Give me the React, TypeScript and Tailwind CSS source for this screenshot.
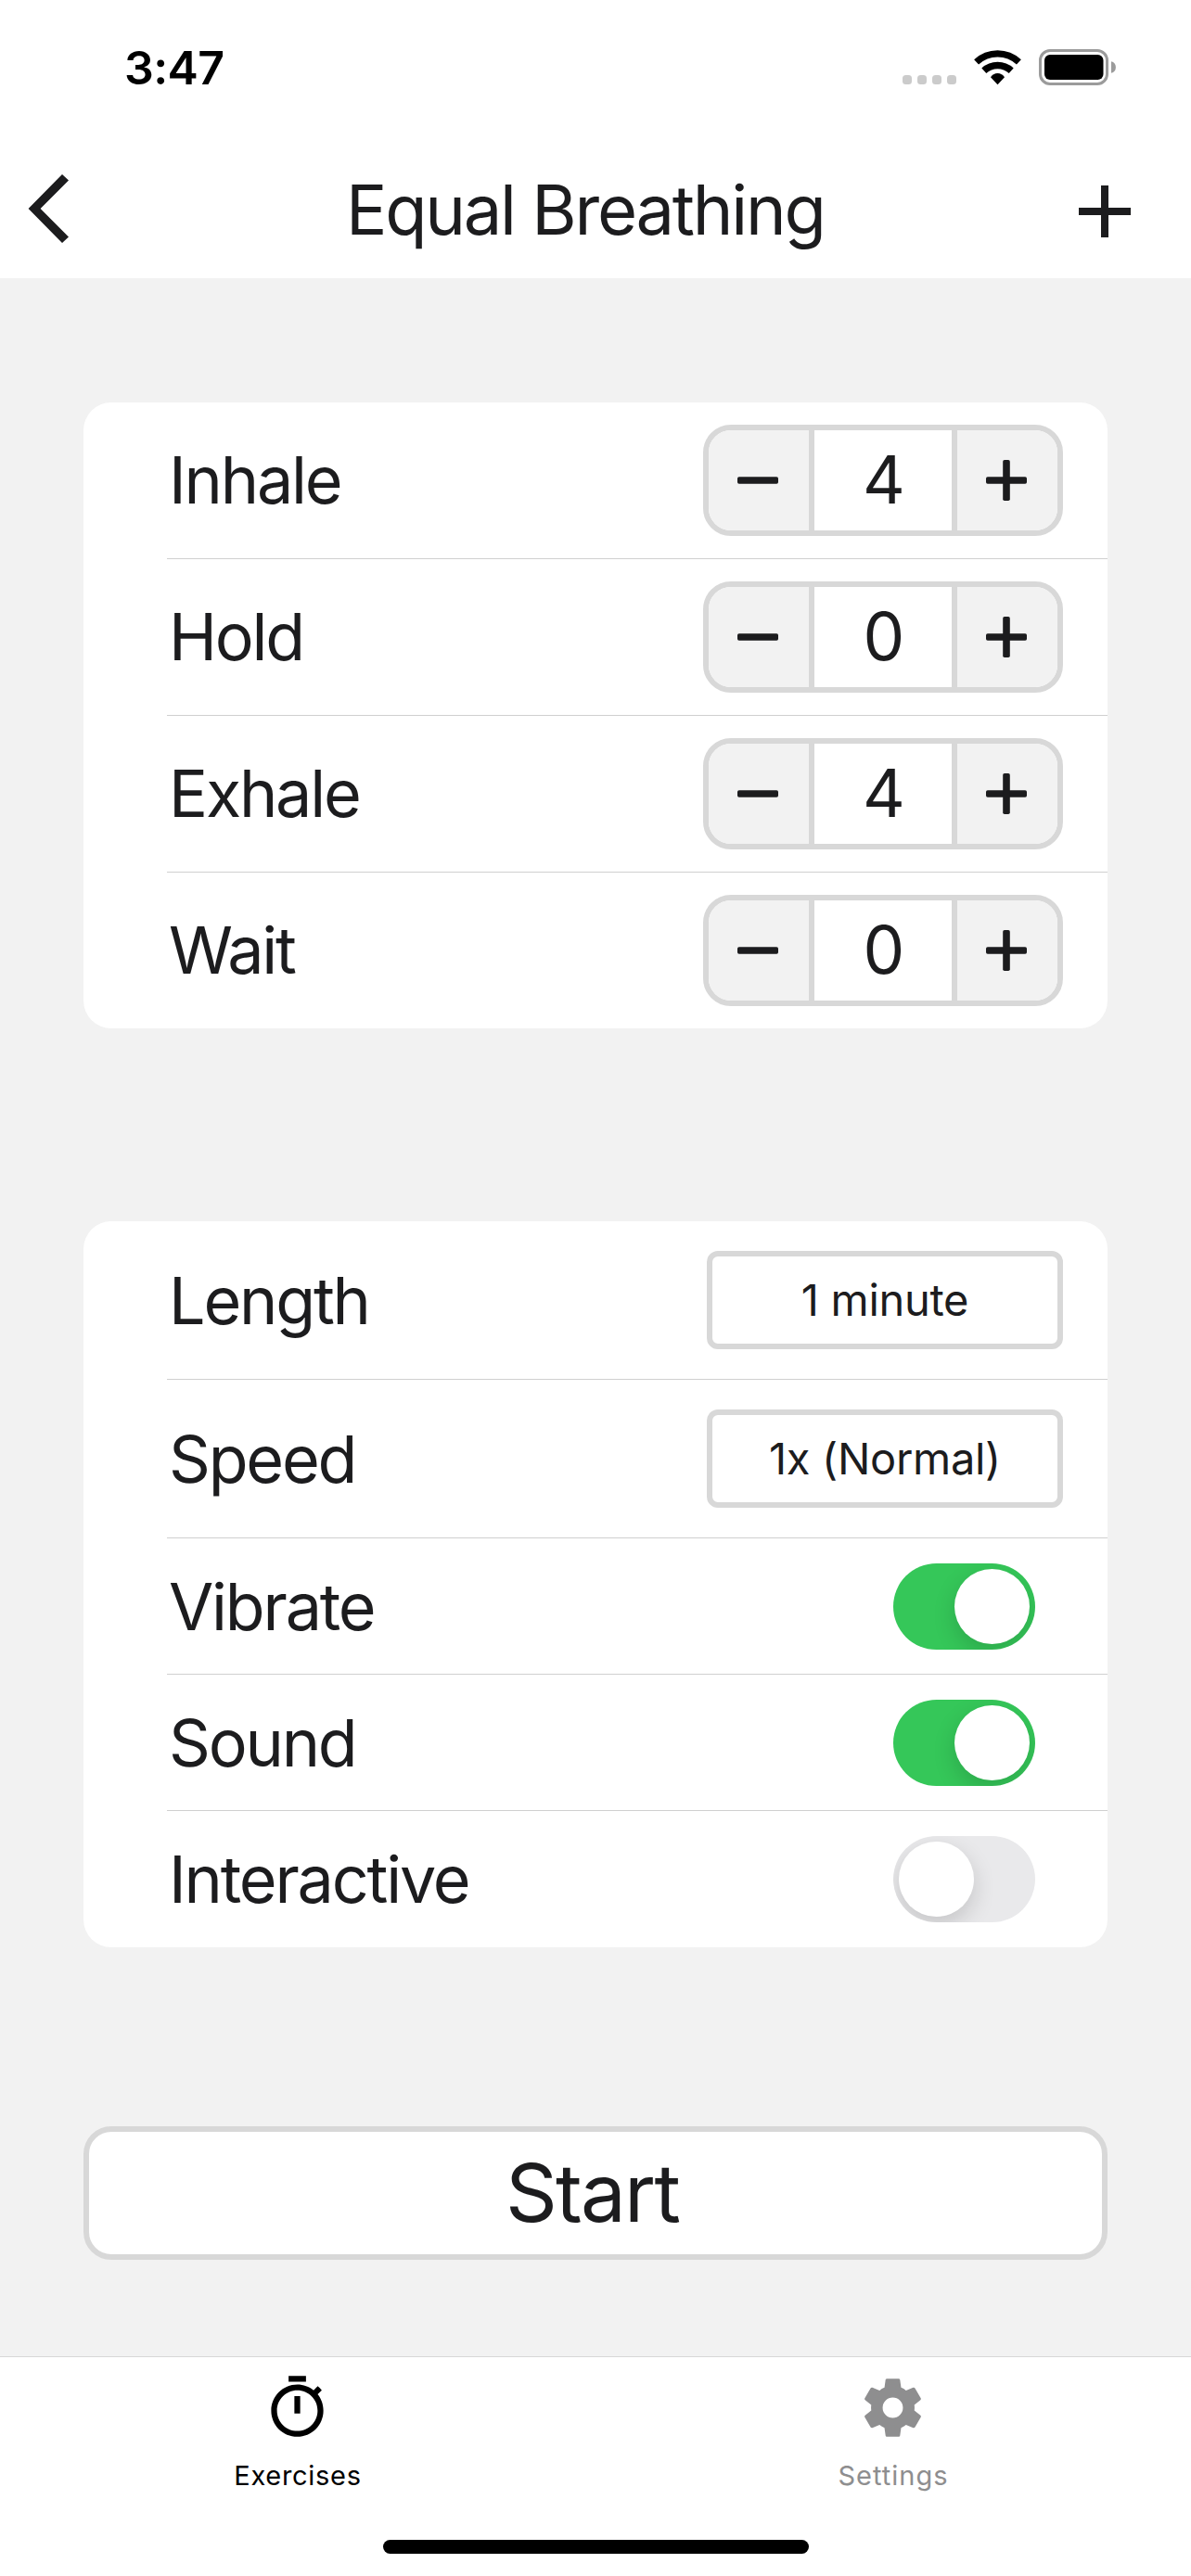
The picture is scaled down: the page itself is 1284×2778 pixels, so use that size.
import React from "react";

function StatusBar() {
  return (
    <div className="flex h-[146px] items-start justify-between pl-[134px] pr-[81px] text-black">
      <span className="mt-[42px] text-[50px] leading-[62px] font-semibold tracking-[-0.6px]">3:47</span>
      <div className="mt-[53px] flex h-[39px]">
        <div className="mt-[28px] flex gap-[6px]">
          {[0, 1, 2, 3].map((i) => (
            <span key={i} className="h-[10px] w-[10px] rounded-[3.5px] bg-[#cbcbcb]" />
          ))}
        </div>
        <svg className="ml-[19px] h-[39px] w-[51px]" viewBox="0 0 51 39" fill="none">
          <path d="M2.6 13.9A33.5 33.5 0 0 1 48.4 13.9" stroke="#000" strokeWidth="7.2" />
          <path d="M10.8 23.2A21.8 21.8 0 0 1 40.2 23.2" stroke="#000" strokeWidth="7.4" />
          <path d="M25.5 38.3 18 30.3A8.8 8.8 0 0 1 33 30.3Z" fill="#000" />
        </svg>
        <svg className="ml-[19px] h-[39px] w-[83px]" viewBox="0 0 83 39">
          <rect x="1.5" y="1.5" width="72" height="36" rx="10.5" fill="none" stroke="#9b9b9b" strokeWidth="3" />
          <rect x="6" y="6" width="63.5" height="27" rx="6" fill="#000" />
          <path d="M78 13.2a6.5 6.5 0 0 1 0 12.6Z" fill="#9b9b9b" />
        </svg>
      </div>
    </div>
  );
}

function Header() {
  return (
    <header className="flex h-[154px] items-start pl-[30px] pr-[65px]">
      <svg className="mt-[42px] h-[74px] w-[44px]" viewBox="0 0 44 74">
        <path d="M37 0 44 6.6 13.6 37 44 67.4 37 74 .6 37Z" fill="#1c1c1e" />
      </svg>
      <h1 className="mt-[35px] ml-[299px] text-[74px] leading-[90px] tracking-[-2.25px]">Equal Breathing</h1>
      <svg className="mt-[54px] ml-auto h-[56px] w-[56px]" viewBox="0 0 56 56">
        <path d="M24 0h8v24h24v8H32v24h-8V32H0v-8h24Z" fill="#1c1c1e" />
      </svg>
    </header>
  );
}

function Row({
  label,
  height,
  nudge = "",
  children,
}: {
  label: string;
  height: string;
  nudge?: string;
  children: React.ReactNode;
}) {
  return (
    <div className={`ml-[90px] flex items-center justify-between border-b border-[#d0d0d0] last:border-b-0 ${height}`}>
      <span className={`ml-[2px] text-[70px] leading-[86px] tracking-[-2.2px] ${nudge}`}>{label}</span>
      {children}
    </div>
  );
}

function Stepper({ value }: { value: number }) {
  return (
    <div className="mr-[48px] flex h-[120px] w-[388px] overflow-hidden rounded-[30px] border-[6px] border-[#d8d8d8] bg-white">
      <button className="flex w-[114px] items-center border-r-[6px] border-[#d8d8d8] bg-[#f2f2f2] pl-[31px]">
        <svg className="h-[44px] w-[44px]" viewBox="0 0 44 44">
          <rect y="18.2" width="44" height="7.6" rx="1.8" fill="#1c1c1e" />
        </svg>
      </button>
      <span className="w-[148px] pl-[2px] text-center text-[71px] leading-[107px]">{value}</span>
      <button className="flex w-[114px] items-center border-l-[6px] border-[#d8d8d8] bg-[#f2f2f2] pl-[31px]">
        <svg className="h-[44px] w-[44px]" viewBox="0 0 44 44">
          <rect y="18.2" width="44" height="7.6" rx="1.8" fill="#1c1c1e" />
          <rect x="18.2" width="7.6" height="44" rx="1.8" fill="#1c1c1e" />
        </svg>
      </button>
    </div>
  );
}

function Select({ value }: { value: string }) {
  return (
    <div className="mr-[48px] flex h-[106px] w-[384px] items-center justify-center rounded-[12px] border-[6px] border-[#d8d8d8] pt-[1px] text-[47px] tracking-[-0.3px]">
      <span>{value}</span>
    </div>
  );
}

function Toggle({ on }: { on: boolean }) {
  return (
    <div
      className={`mr-[78px] flex h-[93px] w-[153px] overflow-hidden rounded-full p-[6px] ${
        on ? "justify-end bg-[#35c759]" : "justify-start bg-[#e9e9eb]"
      }`}
    >
      <span className="h-[81px] w-[81px] rounded-full bg-white shadow-[0_9px_24px_rgba(0,0,0,0.16)]" />
    </div>
  );
}

export default function App() {
  return (
    <div className="flex h-[2778px] w-[1284px] flex-col bg-white font-['Inter',sans-serif] text-[#1c1c1e]">
      <StatusBar />
      <Header />
      <main className="h-[2241px] bg-[#f2f2f2] px-[90px] pt-[134px]">
        <section className="rounded-[30px] bg-white">
          <Row label="Inhale" height="h-[169px]"><Stepper value={4} /></Row>
          <Row label="Hold" height="h-[169px]"><Stepper value={0} /></Row>
          <Row label="Exhale" height="h-[169px]"><Stepper value={4} /></Row>
          <Row label="Wait" height="h-[168px]"><Stepper value={0} /></Row>
        </section>
        <section className="mt-[208px] rounded-[30px] bg-white">
          <Row label="Length" height="h-[171px]" nudge="pt-[2px]"><Select value="1 minute" /></Row>
          <Row label="Speed" height="h-[171px]" nudge="pt-[2px]"><Select value="1x (Normal)" /></Row>
          <Row label="Vibrate" height="h-[147px]" nudge="pt-[2px]"><Toggle on /></Row>
          <Row label="Sound" height="h-[147px]" nudge="pt-[2px]"><Toggle on /></Row>
          <Row label="Interactive" height="h-[147px]"><Toggle on={false} /></Row>
        </section>
        <button className="mt-[193px] block h-[144px] w-full rounded-[30px] border-[6px] border-[#d8d8d8] bg-white pr-[7px] text-center text-[87px] leading-[132px] tracking-[-1.8px]">
          Start
        </button>
      </main>
      <nav className="flex h-[198px] border-t border-[#d8d8d8]">
        <div className="flex flex-1 flex-col items-center pt-[17px] text-black">
          <svg className="mr-[1px] h-[75px] w-[75px]" viewBox="0 0 24 24" fill="currentColor">
            <path d="M15 1H9v2h6V1zm-4 13h2V8h-2v6zm8.03-6.61 1.42-1.42c-.43-.51-.9-.99-1.41-1.41l-1.42 1.42C16.07 4.74 14.12 4 12 4c-4.97 0-9 4.03-9 9s4.02 9 9 9 9-4.03 9-9c0-2.12-.74-4.07-1.97-5.61zM12 20c-3.87 0-7-3.13-7-7s3.13-7 7-7 7 3.13 7 7-3.13 7-7 7z" />
          </svg>
          <span className="mt-[18px] text-[29px] leading-[36px] tracking-[0.7px]">Exercises</span>
        </div>
        <div className="flex flex-1 flex-col items-center pt-[17px] text-[#8e8e8f]">
          <svg className="mr-[1px] h-[75px] w-[75px]" viewBox="0 0 24 24" fill="currentColor">
            <path d="M12 15.5A3.5 3.5 0 0 1 8.5 12 3.5 3.5 0 0 1 12 8.5a3.5 3.5 0 0 1 3.5 3.5 3.5 3.5 0 0 1-3.5 3.5m7.43-2.53c.04-.32.07-.64.07-.97s-.03-.66-.07-1l2.11-1.63c.19-.15.24-.42.12-.64l-2-3.46c-.12-.22-.39-.31-.61-.22l-2.49 1c-.52-.39-1.06-.73-1.69-.98l-.37-2.65A.506.506 0 0 0 14 2h-4c-.25 0-.46.18-.5.42l-.37 2.65c-.63.25-1.17.59-1.69.98l-2.49-1c-.22-.09-.49 0-.61.22l-2 3.46c-.13.22-.07.49.12.64L4.57 11c-.04.34-.07.67-.07 1s.03.65.07.97l-2.11 1.66c-.19.15-.25.42-.12.64l2 3.46c.12.22.39.3.61.22l2.49-1.01c.52.4 1.06.74 1.69.99l.37 2.65c.04.24.25.42.5.42h4c.25 0 .46-.18.5-.42l.37-2.65c.63-.26 1.17-.59 1.69-.99l2.49 1.01c.22.08.49 0 .61-.22l2-3.46c.12-.22.07-.49-.12-.64z" />
          </svg>
          <span className="mt-[18px] text-[29px] leading-[36px] tracking-[1px]">Settings</span>
        </div>
      </nav>
      <div className="mx-auto h-[15px] w-[459px] rounded-full bg-black" />
    </div>
  );
}
